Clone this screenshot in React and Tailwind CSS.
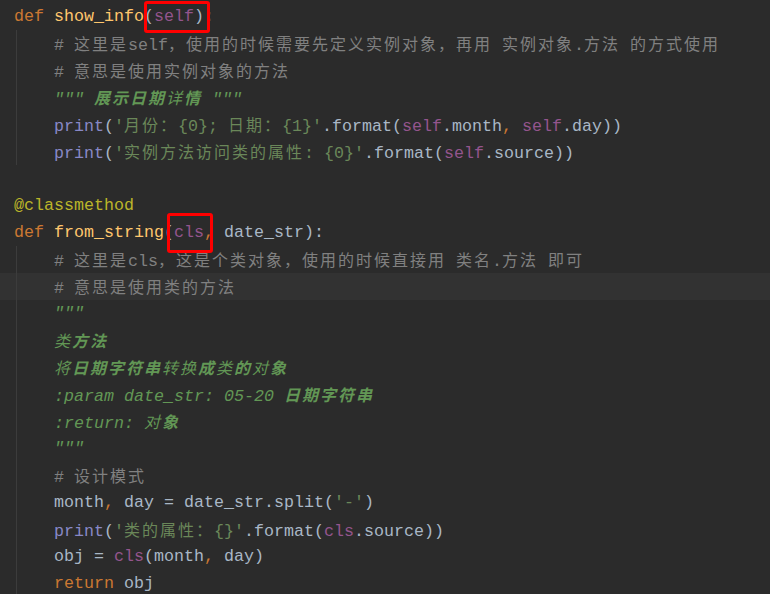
import React from "react";

const CJK_RE = /([\u2E80-\u9FFF\u3000-\u303F\uFF00-\uFFEF]+)/;

const K = "text-[#CC7832]";
const FN = "text-[#FFC66D]";
const SELF = "text-[#94558D]";
const BI = "text-[#8888C6]";
const STR = "text-[#6A8759]";
const COM = "text-[#808080]";
const DOC = "text-[#629755] italic";
const DOCB = "text-[#629755] italic font-bold";
const DEC = "text-[#BBB529]";
const D = "text-[#A9B7C6]";

function Run({ t, c }) {
  const parts = t.split(CJK_RE);
  return (
    <span className={c}>
      {parts.map((p, i) =>
        i % 2 === 1 ? (
          <span
            key={i}
            className="font-['Noto_Sans_CJK_SC',sans-serif] text-[16px] tracking-[2px]"
          >
            {p}
          </span>
        ) : (
          <React.Fragment key={i}>{p}</React.Fragment>
        )
      )}
    </span>
  );
}

function Line({ segs, indent, hl }) {
  return (
    <div
      className={
        "h-[27px] shrink-0 whitespace-pre " +
        (indent ? "pl-[54px] " : "pl-[14px] ") +
        (hl ? "bg-[#323232]" : "")
      }
    >
      {segs.map((s, i) => (
        <Run key={i} t={s[0]} c={s[1]} />
      ))}
    </div>
  );
}

function Body({ lines }) {
  return (
    <div className="relative flex flex-col shrink-0">
      {lines.map((l, i) => (
        <Line key={i} segs={l.segs} indent hl={l.hl} />
      ))}
      <div className="absolute left-[16px] top-0 bottom-0 w-px bg-[#3C3C3C]" />
    </div>
  );
}

export default function App() {
  const body1 = [
    { segs: [["# 这里是self，使用的时候需要先定义实例对象，再用 实例对象.方法 的方式使用", COM]] },
    { segs: [["# 意思是使用实例对象的方法", COM]] },
    { segs: [['""" ', DOC], ["展示日期", DOCB], ["详", DOC], ["情", DOCB], [' """', DOC]] },
    {
      segs: [
        ["print", BI],
        ["(", D],
        ["'月份：{0}; 日期：{1}'", STR],
        [".format(", D],
        ["self", SELF],
        [".month", D],
        [",", K],
        [" ", D],
        ["self", SELF],
        [".day))", D],
      ],
    },
    {
      segs: [
        ["print", BI],
        ["(", D],
        ["'实例方法访问类的属性: {0}'", STR],
        [".format(", D],
        ["self", SELF],
        [".source))", D],
      ],
    },
  ];

  const body2 = [
    { segs: [["# 这里是cls，这是个类对象，使用的时候直接用 类名.方法 即可", COM]] },
    { segs: [["# 意思是使用类的方法", COM]], hl: true },
    { segs: [['"""', DOC]] },
    { segs: [["类", DOC], ["方法", DOCB]] },
    {
      segs: [
        ["将", DOC],
        ["日期字符串", DOCB],
        ["转换", DOC],
        ["成", DOCB],
        ["类", DOC],
        ["的", DOCB],
        ["对", DOC],
        ["象", DOCB],
      ],
    },
    { segs: [[":param date_str: 05-20 ", DOC], ["日期字符串", DOCB]] },
    { segs: [[":return: ", DOC], ["对", DOC], ["象", DOCB]] },
    { segs: [['"""', DOC]] },
    { segs: [["# 设计模式", COM]] },
    {
      segs: [
        ["month", D],
        [",", K],
        [" day = date_str.split(", D],
        ["'-'", STR],
        [")", D],
      ],
    },
    {
      segs: [
        ["print", BI],
        ["(", D],
        ["'类的属性：{}'", STR],
        [".format(", D],
        ["cls", SELF],
        [".source))", D],
      ],
    },
    {
      segs: [
        ["obj = ", D],
        ["cls", SELF],
        ["(month", D],
        [",", K],
        [" day)", D],
      ],
    },
    { segs: [["return", K], [" obj", D]] },
  ];

  return (
    <div className="relative flex flex-col w-[770px] h-[594px] overflow-hidden bg-[#2B2B2B] pt-[2.5px] font-['Liberation_Mono',monospace] text-[16.67px] leading-[27px] text-[#A9B7C6]">
      <Line
        segs={[
          ["def", K],
          [" ", D],
          ["show_info", FN],
          ["(", D],
          ["self", SELF],
          ["):", D],
        ]}
      />
      <Body lines={body1} />
      <Line segs={[["", D]]} />
      <Line segs={[["@classmethod", DEC]]} />
      <Line
        segs={[
          ["def", K],
          [" ", D],
          ["from_string", FN],
          ["(", D],
          ["cls", SELF],
          [",", K],
          [" date_str):", D],
        ]}
      />
      <Body lines={body2} />

      <div className="absolute left-[144px] top-[1px] w-[66px] h-[32px] border-[3px] border-[#FF0000] rounded-[3px]" />
      <div className="absolute left-[167px] top-[213px] w-[46px] h-[40px] border-[3px] border-[#FF0000] rounded-[3px]" />
    </div>
  );
}
